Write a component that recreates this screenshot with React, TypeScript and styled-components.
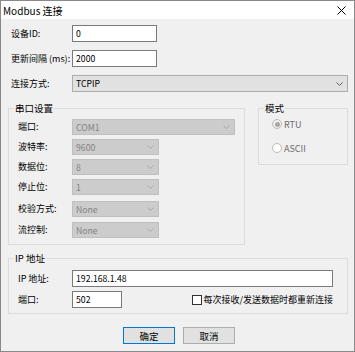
import React from "react";
import styled, { createGlobalStyle } from "styled-components";

const Global = createGlobalStyle`
  html, body { margin: 0; padding: 0; background: #f0f0f0; }
  * { box-sizing: border-box; }
  body { font-family: "Noto Sans CJK SC", "Noto Sans", sans-serif; font-size: 9px; color: #000; }
`;

const Window = styled.div`
  width: 355px;
  height: 352px;
  border: 1px solid #8a8a8a;
  background: #f0f0f0;
  display: flex;
  flex-direction: column;
`;

const TitleBar = styled.div`
  height: 18px;
  background: #fff;
  display: flex;
  align-items: center;
  justify-content: space-between;
  padding: 0 8px 0 2px;
  font-size: 10px;
  flex-shrink: 0;
`;

const Body = styled.div`
  flex: 1;
  padding: 6px 6px 0 7px;
  display: flex;
  flex-direction: column;
`;

const TopForm = styled.div`
  display: grid;
  grid-template-columns: 61px 1fr;
  row-gap: 8px;
  padding-left: 3px;
  align-items: center;
`;

const Label = styled.span<{ $mt?: number }>`
  line-height: 12px;
  white-space: nowrap;
  margin-top: ${(p) => p.$mt ?? 0}px;
`;

const TextBox = styled.div<{ $w?: number }>`
  height: 17px;
  width: ${(p) => (p.$w ? `${p.$w}px` : "100%")};
  background: #fff;
  border: 1px solid #7a7a7a;
  padding: 0 3px;
  display: flex;
  align-items: center;
  font-size: 8.7px;
`;

const Combo = styled.div<{ $disabled?: boolean; $w?: number; $mt?: number }>`
  height: ${(p) => (p.$disabled ? 16 : 17)}px;
  width: ${(p) => (p.$w ? `${p.$w}px` : "100%")};
  margin-top: ${(p) => p.$mt ?? 0}px;
  background: ${(p) => (p.$disabled ? "#cccccc" : "#e1e1e1")};
  border: 1px solid ${(p) => (p.$disabled ? "#bfbfbf" : "#adadad")};
  color: ${(p) => (p.$disabled ? "#838383" : "#000")};
  display: flex;
  align-items: center;
  justify-content: space-between;
  padding: 0 4px 0 3px;
  font-size: 8.7px;
`;

const Arrow = ({ color }: { color: string }) => (
  <svg width="7" height="4" viewBox="0 0 7 4">
    <path d="M0.5 0.5 L3.5 3.5 L6.5 0.5" fill="none" stroke={color} strokeWidth="1" />
  </svg>
);

const GroupsRow = styled.div`
  display: flex;
  gap: 13px;
  margin-top: 10px;
  align-items: flex-start;
`;

const Group = styled.fieldset<{ $w?: number; $mt?: number }>`
  margin: ${(p) => p.$mt ?? 0}px 0 0 0;
  padding: 0;
  border: 1px solid #dcdcdc;
  width: ${(p) => (p.$w ? `${p.$w}px` : "100%")};
  min-width: 0;
`;

const Legend = styled.legend`
  margin-left: 5px;
  padding: 0 1px;
  line-height: 12px;
  font-size: 9.5px;
`;

const SerialContent = styled.div`
  display: grid;
  grid-template-columns: 54px 1fr;
  row-gap: 4px;
  padding: 5px 9px 6px 9px;
  align-items: center;
`;

const ModeContent = styled.div`
  display: flex;
  flex-direction: column;
  gap: 12px;
  padding: 4px 0 9px 13px;
  height: 50px;
`;

const RadioRow = styled.div`
  display: flex;
  align-items: center;
  gap: 2px;
  color: #6d6d6d;
  height: 12px;
`;

const Radio = styled.span<{ $checked?: boolean }>`
  width: 10px;
  height: 10px;
  border-radius: 50%;
  border: 1px solid #bcbcbc;
  background: ${(p) => (p.$checked ? "#f0f0f0" : "#fff")};
  display: flex;
  align-items: center;
  justify-content: center;
  &::after {
    content: "";
    display: ${(p) => (p.$checked ? "block" : "none")};
    width: 5px;
    height: 5px;
    border-radius: 50%;
    background: #a8a8a8;
  }
`;

const IpContent = styled.div`
  display: grid;
  grid-template-columns: 54px 1fr;
  row-gap: 4px;
  padding: 6px 14px 5px 9px;
  align-items: center;
`;

const PortRow = styled.div`
  display: flex;
  align-items: center;
  justify-content: space-between;
`;

const CheckLabel = styled.label`
  display: flex;
  align-items: center;
  gap: 1px;
  white-space: nowrap;
`;

const CheckBox = styled.span`
  width: 10px;
  height: 10px;
  border: 1px solid #333;
  background: #fff;
`;

const Buttons = styled.div`
  display: flex;
  justify-content: center;
  gap: 8px;
  margin-top: 13px;
  padding-left: 2px;
`;

const Button = styled.button<{ $default?: boolean }>`
  width: 52px;
  height: 17px;
  background: #e1e1e1;
  border: 1px solid ${(p) => (p.$default ? "#0078d7" : "#adadad")};
  font-family: inherit;
  font-size: 9.5px;
  padding: 0;
  color: #000;
`;

const serialRows: { label: string; value: string; w?: number; s?: number }[] = [
  { label: "端口:", value: "COM1" },
  { label: "波特率:", value: "9600", w: 87 },
  { label: "数据位:", value: "8", w: 87 },
  { label: "停止位:", value: "1", w: 87 },
  { label: "校验方式:", value: "None", w: 87, s: 2 },
  { label: "流控制:", value: "None", w: 87, s: 1 },
];

export default function App() {
  return (
    <>
      <Global />
      <Window>
        <TitleBar>
          <span>Modbus 连接</span>
          <svg width="9" height="9" viewBox="0 0 9 9">
            <path d="M0.5 0.5 L8.5 8.5 M8.5 0.5 L0.5 8.5" stroke="#000" strokeWidth="1" />
          </svg>
        </TitleBar>
        <Body>
          <TopForm>
            <Label>设备ID:</Label>
            <TextBox $w={85}>0</TextBox>
            <Label>更新间隔 (ms):</Label>
            <TextBox $w={85}>2000</TextBox>
            <Label>连接方式:</Label>
            <Combo>
              <span>TCPIP</span>
              <Arrow color="#606060" />
            </Combo>
          </TopForm>
          <GroupsRow>
            <Group $w={237}>
              <Legend>串口设置</Legend>
              <SerialContent>
                {serialRows.map((r) => (
                  <React.Fragment key={r.label}>
                    <Label $mt={r.s}>{r.label}</Label>
                    <Combo $disabled $w={r.w} $mt={r.s}>
                      <span>{r.value}</span>
                      <Arrow color="#a8a8a8" />
                    </Combo>
                  </React.Fragment>
                ))}
              </SerialContent>
            </Group>
            <Group $w={90}>
              <Legend>模式</Legend>
              <ModeContent>
                <RadioRow>
                  <Radio $checked />
                  <span>RTU</span>
                </RadioRow>
                <RadioRow>
                  <Radio />
                  <span>ASCII</span>
                </RadioRow>
              </ModeContent>
            </Group>
          </GroupsRow>
          <Group $mt={7}>
            <Legend>IP 地址</Legend>
            <IpContent>
              <Label>IP 地址:</Label>
              <TextBox>192.168.1.48</TextBox>
              <Label>端口:</Label>
              <PortRow>
                <TextBox $w={50}>502</TextBox>
                <CheckLabel>
                  <CheckBox />
                  <span>每次接收/发送数据时都重新连接</span>
                </CheckLabel>
              </PortRow>
            </IpContent>
          </Group>
          <Buttons>
            <Button $default>确定</Button>
            <Button>取消</Button>
          </Buttons>
        </Body>
      </Window>
    </>
  );
}
